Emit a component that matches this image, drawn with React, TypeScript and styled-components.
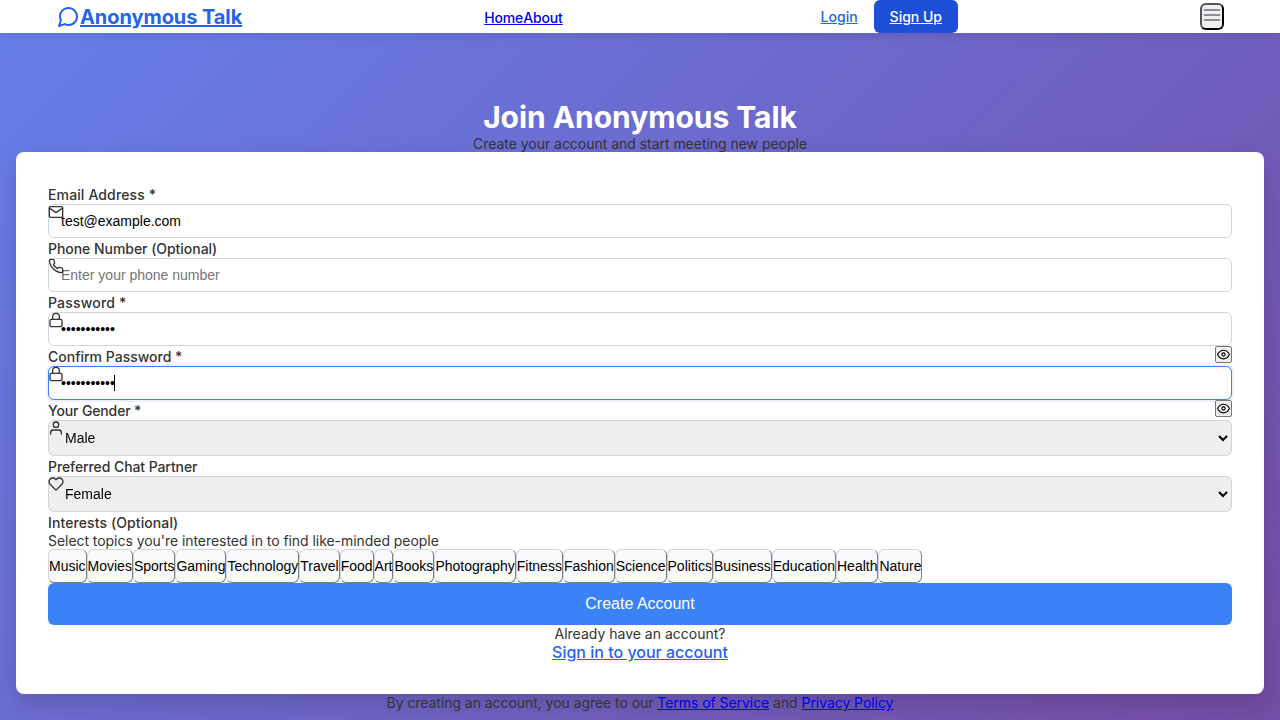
import React from "react";
import styled, { createGlobalStyle, css } from "styled-components";
import { FiEye, FiHeart, FiLock, FiMail, FiMenu, FiMessageCircle, FiPhone, FiUser } from "react-icons/fi";

const GlobalStyle = createGlobalStyle`
  *, *::before, *::after { box-sizing: border-box; }
  body {
    margin: 0;
    font-family: Inter, sans-serif;
    font-size: 14px;
    line-height: 18px;
    color: #333;
    background: #fff;
    height: 720px;
    overflow: hidden;
  }
  h1, p { margin: 0; }
`;

const Page = styled.div`
  height: 720px;
  display: flex;
  flex-direction: column;
  overflow: hidden;
`;

const NavBar = styled.nav`
  position: relative;
  z-index: 1;
  flex: none;
  height: 33px;
  padding: 0 56px;
  display: flex;
  align-items: center;
  justify-content: space-between;
  background: #fff;
  box-shadow: 0 2px 10px rgba(0, 0, 0, 0.1);
`;

const Brand = styled.a`
  display: flex;
  align-items: center;
  font-size: 20px;
  line-height: 24px;
  font-weight: 700;
  letter-spacing: -0.07px;
  color: #2563eb;
  text-decoration: underline;
`;

const NavLinks = styled.div`
  display: flex;
  padding-top: 3px;
`;

const NavLink = styled.a`
  font-weight: 500;
  letter-spacing: -0.15px;
  color: #0000ee;
  text-decoration: underline;
`;

const AuthLinks = styled.div`
  display: flex;
`;

const AuthLink = styled.a<{ $filled?: boolean }>`
  padding: 8px 16px;
  line-height: 17px;
  font-weight: 500;
  border-radius: 6px;
  text-decoration: underline;
  color: ${(p) => (p.$filled ? "#fff" : "#2563eb")};
  background: ${(p) => (p.$filled ? "#1d4ed8" : "transparent")};
`;

const MenuButton = styled.button`
  width: 24px;
  height: 27px;
  padding: 0;
  display: flex;
  align-items: flex-start;
  justify-content: center;
  border: 2px outset #000;
  border-radius: 6px;
  background: #efefef;
  color: #6b7280;
`;

const Main = styled.main`
  flex: none;
  height: 743px;
  padding: 66px 16px 0;
  display: flex;
  flex-direction: column;
  text-align: center;
  background: linear-gradient(135deg, #667eea 0%, #764ba2 100%);
`;

const Title = styled.h1`
  font-size: 30px;
  line-height: 36px;
  font-weight: 700;
  letter-spacing: -0.05px;
  color: #fff;
`;

const Text = styled.p<{ $tracking?: number }>`
  letter-spacing: ${(p) => p.$tracking ?? 0}px;
`;

const Card = styled.form`
  height: 542px;
  flex: none;
  margin-top: -1px;
  padding: 34px 32px 0;
  border-radius: 8px;
  background: #fff;
  box-shadow: 0 10px 25px rgba(0, 0, 0, 0.15);
  text-align: left;
`;

const Field = styled.div`
  display: flex;
  flex-direction: column;
  margin-bottom: 2px;
`;

const Label = styled.label<{ $tracking?: number }>`
  display: block;
  height: 18px;
  font-weight: 500;
  letter-spacing: ${(p) => p.$tracking ?? 0}px;
`;

const ControlWrap = styled.div`
  position: relative;
  display: flex;
`;

const FieldIcon = styled.span`
  position: absolute;
  top: 0;
  left: 0;
  display: flex;
  font-size: 16px;
`;

const Caret = styled.span`
  position: absolute;
  top: 9px;
  left: 66px;
  width: 1px;
  height: 16px;
  background: #000;
`;

const control = css`
  flex: 1;
  border: 1px solid #d1d5db;
  border-radius: 6px;
  font: 14px "Liberation Sans", Arial, sans-serif;
  color: #000;
  outline: none;
`;

const Input = styled.input`
  ${control}
  height: 34px;
  padding: 8px 12px;
  background: #fff;
  caret-color: transparent;
  &:focus {
    border-color: #3b82f6;
    box-shadow: 0 0 0 2px rgba(59, 130, 246, 0.1);
  }
`;

const Select = styled.select`
  ${control}
  height: 36px;
  padding: 8px 0 8px 12px;
  background: #efefef;
`;

const RevealButton = styled.button`
  position: absolute;
  z-index: 1;
  top: 34px;
  right: 0;
  width: 17px;
  height: 17px;
  padding: 0;
  display: flex;
  align-items: center;
  justify-content: center;
  border: 1px solid #767676;
  border-radius: 2px;
  background: #efefef;
  color: #000;
  font-size: 13px;
`;

const Topics = styled.div`
  display: flex;
  margin-top: -1px;
`;

const Topic = styled.button`
  height: 34px;
  padding: 0;
  border: 1px solid;
  border-color: #d1d5db #808080 #808080 #d1d5db;
  border-radius: 6px;
  background: #f9fafb;
  font: 14px "Liberation Sans", Arial, sans-serif;
  color: #000;
`;

const Submit = styled.button`
  display: block;
  width: 100%;
  height: 42px;
  border: 0;
  border-radius: 6px;
  background: #3b82f6;
  color: #fff;
  font: 16px "Liberation Sans", Arial, sans-serif;
`;

const SignIn = styled.div`
  text-align: center;
`;

const SignInLink = styled.a`
  font-size: 16px;
  font-weight: 500;
  color: #2563eb;
  text-decoration: underline;
`;

const LegalLink = styled.a`
  color: #0000ee;
  text-decoration: underline;
`;

const topics = [
  "Music", "Movies", "Sports", "Gaming", "Technology", "Travel", "Food", "Art", "Books",
  "Photography", "Fitness", "Fashion", "Science", "Politics", "Business", "Education",
  "Health", "Nature",
];

type FieldRowProps = {
  label: string;
  tracking?: number;
  icon: React.ReactNode;
  reveal?: boolean;
  caret?: boolean;
  children: React.ReactNode;
};

function FieldRow({ label, tracking, icon, reveal, caret, children }: FieldRowProps) {
  return (
    <Field>
      <Label $tracking={tracking}>{label}</Label>
      <ControlWrap>
        {children}
        <FieldIcon>{icon}</FieldIcon>
        {caret && <Caret />}
        {reveal && (
          <RevealButton type="button" aria-label="Show password">
            <FiEye />
          </RevealButton>
        )}
      </ControlWrap>
    </Field>
  );
}

export default function App() {
  return (
    <Page>
      <GlobalStyle />
      <NavBar>
        <Brand>
          <FiMessageCircle size={24} />
          <span>Anonymous Talk</span>
        </Brand>
        <NavLinks>
          <NavLink>Home</NavLink>
          <NavLink>About</NavLink>
        </NavLinks>
        <AuthLinks>
          <AuthLink>Login</AuthLink>
          <AuthLink $filled>Sign Up</AuthLink>
        </AuthLinks>
        <MenuButton aria-label="Menu">
          <FiMenu size={20} />
        </MenuButton>
      </NavBar>
      <Main>
        <Title>Join Anonymous Talk</Title>
        <Text $tracking={-0.03}>Create your account and start meeting new people</Text>
        <Card>
          <FieldRow label="Email Address *" tracking={0.13} icon={<FiMail />}>
            <Input type="email" defaultValue="test@example.com" />
          </FieldRow>
          <FieldRow label="Phone Number (Optional)" tracking={-0.04} icon={<FiPhone />}>
            <Input type="tel" placeholder="Enter your phone number" />
          </FieldRow>
          <FieldRow label="Password *" tracking={0.2} icon={<FiLock />} reveal>
            <Input type="password" defaultValue="password123" />
          </FieldRow>
          <FieldRow label="Confirm Password *" icon={<FiLock />} reveal caret>
            <Input type="password" defaultValue="password123" autoFocus />
          </FieldRow>
          <FieldRow label="Your Gender *" tracking={-0.13} icon={<FiUser />}>
            <Select defaultValue="Male">
              <option>Male</option>
            </Select>
          </FieldRow>
          <FieldRow label="Preferred Chat Partner" tracking={-0.09} icon={<FiHeart />}>
            <Select defaultValue="Female">
              <option>Female</option>
            </Select>
          </FieldRow>
          <Label $tracking={0.1}>Interests (Optional)</Label>
          <Text $tracking={-0.05}>Select topics you're interested in to find like-minded people</Text>
          <Topics>
            {topics.map((t) => (
              <Topic type="button" key={t}>{t}</Topic>
            ))}
          </Topics>
          <Submit type="button">Create Account</Submit>
          <SignIn>
            <Text>Already have an account?</Text>
            <SignInLink>Sign in to your account</SignInLink>
          </SignIn>
        </Card>
        <Text $tracking={-0.055}>
          By creating an account, you agree to our <LegalLink>Terms of Service</LegalLink> and{" "}
          <LegalLink>Privacy Policy</LegalLink>
        </Text>
      </Main>
    </Page>
  );
}
